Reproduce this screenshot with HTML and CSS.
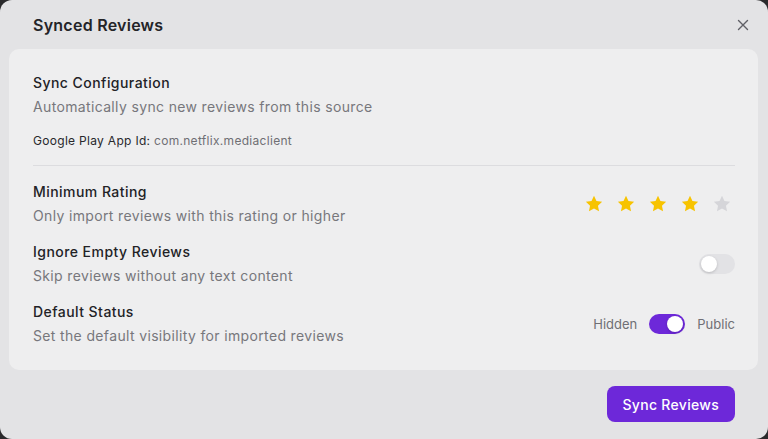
FILE: index.html
```html
<!DOCTYPE html>
<html lang="en">
<head>
    <meta charset="utf-8">
    <meta name="viewport" content="width=device-width, initial-scale=1">
    <title>Synced Reviews</title>
    <link rel="stylesheet" href="styles.css">
</head>
<body>
    <div class="dialog">
        <div class="dialog-header">
            <h2 class="dialog-title">Synced Reviews</h2>
            <button class="close-btn" aria-label="Close">
                <svg width="12" height="12" viewBox="0 0 12 12"><path d="M1.5 1.5l9 9M10.5 1.5l-9 9" stroke="#5f5f66" stroke-width="1.4" stroke-linecap="round"/></svg>
            </button>
        </div>

        <div class="card">
            <div class="section">
                <div class="label">Sync Configuration</div>
                <div class="hint">Automatically sync new reviews from this source</div>
                <div class="app-id">Google Play App Id: <span class="app-id-value">com.netflix.mediaclient</span></div>
            </div>

            <div class="divider"></div>

            <div class="setting">
                <div>
                    <div class="label">Minimum Rating</div>
                    <div class="hint">Only import reviews with this rating or higher</div>
                </div>
                <div class="stars">
                    <button class="star on"><svg viewBox="0 0 24 24"><path d="M12 2.2l2.95 6.2 6.8.85-5 4.7 1.3 6.75L12 17.4l-6.05 3.3 1.3-6.75-5-4.7 6.8-.85z"/></svg></button>
                    <button class="star on"><svg viewBox="0 0 24 24"><path d="M12 2.2l2.95 6.2 6.8.85-5 4.7 1.3 6.75L12 17.4l-6.05 3.3 1.3-6.75-5-4.7 6.8-.85z"/></svg></button>
                    <button class="star on"><svg viewBox="0 0 24 24"><path d="M12 2.2l2.95 6.2 6.8.85-5 4.7 1.3 6.75L12 17.4l-6.05 3.3 1.3-6.75-5-4.7 6.8-.85z"/></svg></button>
                    <button class="star on"><svg viewBox="0 0 24 24"><path d="M12 2.2l2.95 6.2 6.8.85-5 4.7 1.3 6.75L12 17.4l-6.05 3.3 1.3-6.75-5-4.7 6.8-.85z"/></svg></button>
                    <button class="star"><svg viewBox="0 0 24 24"><path d="M12 2.2l2.95 6.2 6.8.85-5 4.7 1.3 6.75L12 17.4l-6.05 3.3 1.3-6.75-5-4.7 6.8-.85z"/></svg></button>
                </div>
            </div>

            <div class="setting">
                <div>
                    <div class="label">Ignore Empty Reviews</div>
                    <div class="hint">Skip reviews without any text content</div>
                </div>
                <span class="switch"><span class="knob"></span></span>
            </div>

            <div class="setting">
                <div>
                    <div class="label">Default Status</div>
                    <div class="hint">Set the default visibility for imported reviews</div>
                </div>
                <div class="status-toggle">
                    <span class="status-text">Hidden</span>
                    <span class="switch checked"><span class="knob"></span></span>
                    <span class="status-text">Public</span>
                </div>
            </div>
        </div>

        <div class="dialog-footer">
            <button class="primary-btn">Sync Reviews</button>
        </div>
    </div>
</body>
</html>
```

FILE: styles.css
```css
body {
    margin: 0;
    padding: 0;
    background: #2a2a2c;
    font-family: 'Inter', 'Noto Sans', sans-serif;
    color: #222226;
}

.dialog {
    height: 439px;
    box-sizing: border-box;
    background: #e3e3e5;
    border-radius: 12px;
    display: flex;
    flex-direction: column;
}

.dialog-header {
    height: 49px;
    display: flex;
    align-items: center;
    justify-content: space-between;
    padding: 0 15px 0 33px;
}

.dialog-title {
    margin: 0;
    font-size: 16px;
    font-weight: 600;
    letter-spacing: 0.25px;
    color: #242428;
}

.close-btn {
    border: none;
    background: none;
    padding: 4px;
    display: flex;
    cursor: pointer;
}

.card {
    margin: 0 10px 0 9px;
    padding: 24px 23px 24px 24px;
    background: #eeeeef;
    border-radius: 10px;
}

.label {
    font-size: 14px;
    line-height: 20px;
    font-weight: 500;
    letter-spacing: 0.45px;
    color: #222226;
}

.hint {
    margin-top: 4px;
    font-size: 14px;
    line-height: 20px;
    letter-spacing: 0.35px;
    color: #77777c;
}

.app-id {
    margin-top: 15px;
    font-size: 12px;
    line-height: 18px;
    letter-spacing: 0.3px;
    color: #28282c;
}

.app-id-value {
    color: #6f6f74;
}

.divider {
    height: 1px;
    background: #dcdcdf;
    margin: 15px 0 16px;
}

.setting {
    display: flex;
    align-items: center;
    justify-content: space-between;
}

.setting + .setting {
    margin-top: 16px;
}

.stars {
    display: flex;
    gap: 8px;
    margin-right: 1px;
}

.star {
    border: none;
    background: none;
    padding: 0 2px;
    display: flex;
    cursor: pointer;
}

.star svg {
    width: 20px;
    height: 20px;
    fill: #d5d5d9;
}

.star.on svg {
    fill: #f7c300;
}

.switch {
    position: relative;
    width: 36px;
    height: 20px;
    border-radius: 10px;
    background: #e2e2e5;
    display: inline-block;
}

.switch .knob {
    position: absolute;
    top: 2px;
    left: 2px;
    width: 16px;
    height: 16px;
    border-radius: 50%;
    background: #fff;
    box-shadow: 0 1px 3px rgba(0, 0, 0, 0.18);
}

.switch.checked {
    background: #6d28d9;
}

.switch.checked .knob {
    left: 18px;
}

.status-toggle {
    display: flex;
    align-items: center;
    gap: 12px;
}

.status-text {
    font-size: 13px;
    color: #6f6f74;
}

.dialog-footer {
    display: flex;
    justify-content: flex-end;
    padding: 16px 33px 0;
}

.primary-btn {
    height: 36px;
    padding: 0 16px;
    border: none;
    border-radius: 8px;
    background: #6d28d9;
    color: #fff;
    font-family: inherit;
    font-size: 14px;
    font-weight: 500;
    letter-spacing: 0.3px;
    cursor: pointer;
}
```
